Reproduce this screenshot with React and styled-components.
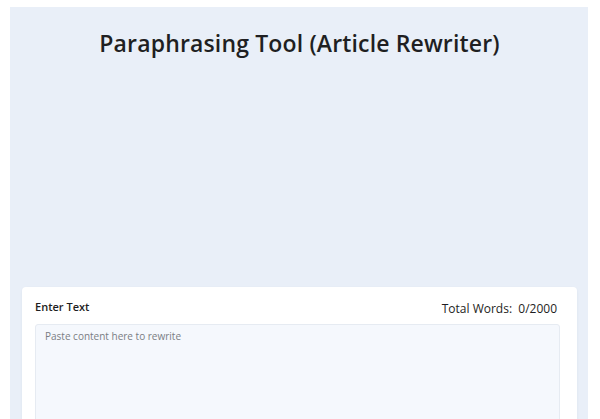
import React from "react";
import styled, { createGlobalStyle } from "styled-components";

const GlobalStyle = createGlobalStyle`
  body {
    margin: 0;
    background: #ffffff;
    font-family: "Open Sans", "Noto Sans", sans-serif;
  }
`;

function App() {
  return (
    <>
      <GlobalStyle />
      <Panel>
        <Title>Paraphrasing Tool (Article Rewriter)</Title>
        <AdSlot />
        <Card>
          <CardHeader>
            <Label>Enter Text</Label>
            <WordCount>
              Total Words:&nbsp; 0/2000
            </WordCount>
          </CardHeader>
          <TextBox placeholder="Paste content here to rewrite" />
        </Card>
      </Panel>
    </>
  );
}

const Panel = styled.div`
  margin: 7px 12px 0 10px;
  background-color: #e9eff8;
  padding: 21px 11px 0 12px;
  min-height: 420px;
`;

const Title = styled.h1`
  margin: 0;
  text-align: center;
  color: #1f1f22;
  font: 600 23px "Open Sans", sans-serif;
  letter-spacing: 0.15px;
  line-height: 30px;
`;

const AdSlot = styled.div`
  height: 229px;
`;

const Card = styled.div`
  background: #ffffff;
  border-radius: 4px;
  box-shadow: 0 1px 3px rgba(30, 50, 90, 0.06);
  padding: 12px 17px 0 13px;
`;

const CardHeader = styled.div`
  display: flex;
  justify-content: space-between;
  align-items: flex-end;
  margin-bottom: 7px;
`;

const Label = styled.span`
  color: #1e1e22;
  font: 600 11px "Open Sans", sans-serif;
  line-height: 16px;
  margin-bottom: 2px;
`;

const WordCount = styled.span`
  color: #1e1e22;
  font: 500 12px "Open Sans", sans-serif;
  line-height: 16px;
  margin-right: 3px;
`;

const TextBox = styled.textarea`
  display: block;
  box-sizing: border-box;
  width: 100%;
  height: 200px;
  resize: none;
  border: 1px solid #e6ebf2;
  border-radius: 3px;
  background: #f5f8fd;
  padding: 4px 9px;
  font: 400 10px "Open Sans", sans-serif;
  color: #333;
  outline: none;
  &::placeholder {
    color: #7a7d84;
  }
`;

export default App;
